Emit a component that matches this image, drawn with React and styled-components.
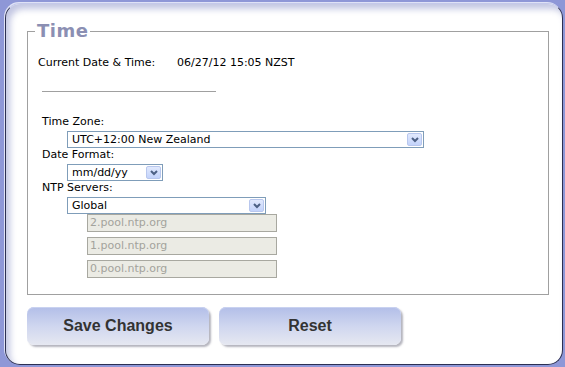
import React from "react";
import styled, { createGlobalStyle } from "styled-components";

const Global = createGlobalStyle`
  html, body {
    margin: 0;
    padding: 0;
    background: #8e97d7;
    width: 565px;
    height: 367px;
    overflow: hidden;
  }
  * { box-sizing: border-box; }
`;

const Frame = styled.div`
  margin: 3px 2px 2px 5px;
  height: 362px;
  background: #fff;
  border: 1px solid #2c2f52;
  border-top-color: #c3c8ea;
  border-radius: 15px;
  box-shadow: inset 4px 5px 6px rgba(120, 128, 190, 0.45), -1px -1px 0 #dfe2f6;
  padding: 17px 13px 0 21px;
  font-family: "DejaVu Sans", Verdana, sans-serif;
  font-size: 11px;
  color: #000;
`;

const Fieldset = styled.fieldset`
  margin: 0;
  border: 1px solid #a0a0a0;
  padding: 0 10px 16px 10px;
  height: 274px;
`;

const Legend = styled.legend`
  margin-left: -3px;
  padding: 0 2px;
  font-family: "DejaVu Sans", Verdana, sans-serif;
  font-weight: bold;
  font-size: 18px;
  line-height: 20px;
  letter-spacing: 0.5px;
  color: #8b8fb3;
`;

const InfoRow = styled.div`
  display: flex;
  margin-top: 15px;
  line-height: 14px;
`;

const InfoLabel = styled.span`
  width: 139px;
`;

const Divider = styled.div`
  width: 174px;
  height: 1px;
  background: #a0a0a0;
  margin: 21px 0 0 4px;
`;

const Group = styled.div`
  margin: 23px 0 0 4px;
  display: flex;
  flex-direction: column;
  align-items: flex-start;
`;

const Label = styled.div`
  line-height: 14px;
`;

const SelectBox = styled.div`
  margin: 2px 0 0 25px;
  width: ${(p) => p.$w}px;
  height: 17px;
  border: 1px solid #7f9db9;
  background: #fff;
  display: flex;
  align-items: center;
  justify-content: space-between;
  padding: 0 1px 0 4px;
  line-height: 15px;
`;

const Arrow = styled.span`
  width: 15px;
  height: 13px;
  border: 1px solid #b8c7ee;
  border-radius: 2px;
  background: linear-gradient(#e1e9fd, #c3d3fb);
  display: flex;
  align-items: center;
  justify-content: center;
`;

const Inputs = styled.div`
  margin-left: 45px;
  display: flex;
  flex-direction: column;
  gap: 5px;
`;

const Input = styled.div`
  width: 190px;
  height: 18px;
  border: 1px solid #a8a8a0;
  background: #ebebe4;
  color: #a3a39c;
  padding-left: 2px;
  line-height: 16px;
`;

const ButtonRow = styled.div`
  display: flex;
  gap: 10px;
  margin-top: 12px;
`;

const Button = styled.div`
  width: 182px;
  height: 38px;
  border-radius: 7px;
  background: linear-gradient(#b2bee8 0%, #cfd6ef 50%, #e6e8f1 100%);
  box-shadow: 2px 2px 2px rgba(90, 90, 110, 0.45), inset 0 1px 0 #c9d2f0;
  display: flex;
  align-items: center;
  justify-content: center;
  font-family: "Liberation Sans", Arial, sans-serif;
  font-weight: bold;
  font-size: 16px;
  color: #333;
`;

const Chevron = () => (
  <svg width="8" height="6" viewBox="0 0 8 6">
    <path d="M1 1 L4 4 L7 1" fill="none" stroke="#4d6185" strokeWidth="2" />
  </svg>
);

const Select = ({ w, children }) => (
  <SelectBox $w={w}>
    <span>{children}</span>
    <Arrow>
      <Chevron />
    </Arrow>
  </SelectBox>
);

export default function App() {
  return (
    <>
      <Global />
      <Frame>
        <Fieldset>
          <Legend>Time</Legend>
          <InfoRow>
            <InfoLabel>Current Date &amp; Time:</InfoLabel>
            <span>06/27/12 15:05 NZST</span>
          </InfoRow>
          <Divider />
          <Group>
            <Label>Time Zone:</Label>
            <Select w={357}>UTC+12:00 New Zealand</Select>
            <Label>Date Format:</Label>
            <Select w={96}>mm/dd/yy</Select>
            <Label>NTP Servers:</Label>
            <Select w={199}>Global</Select>
            <Inputs>
              <Input>2.pool.ntp.org</Input>
              <Input>1.pool.ntp.org</Input>
              <Input>0.pool.ntp.org</Input>
            </Inputs>
          </Group>
        </Fieldset>
        <ButtonRow>
          <Button>Save Changes</Button>
          <Button>Reset</Button>
        </ButtonRow>
      </Frame>
    </>
  );
}
